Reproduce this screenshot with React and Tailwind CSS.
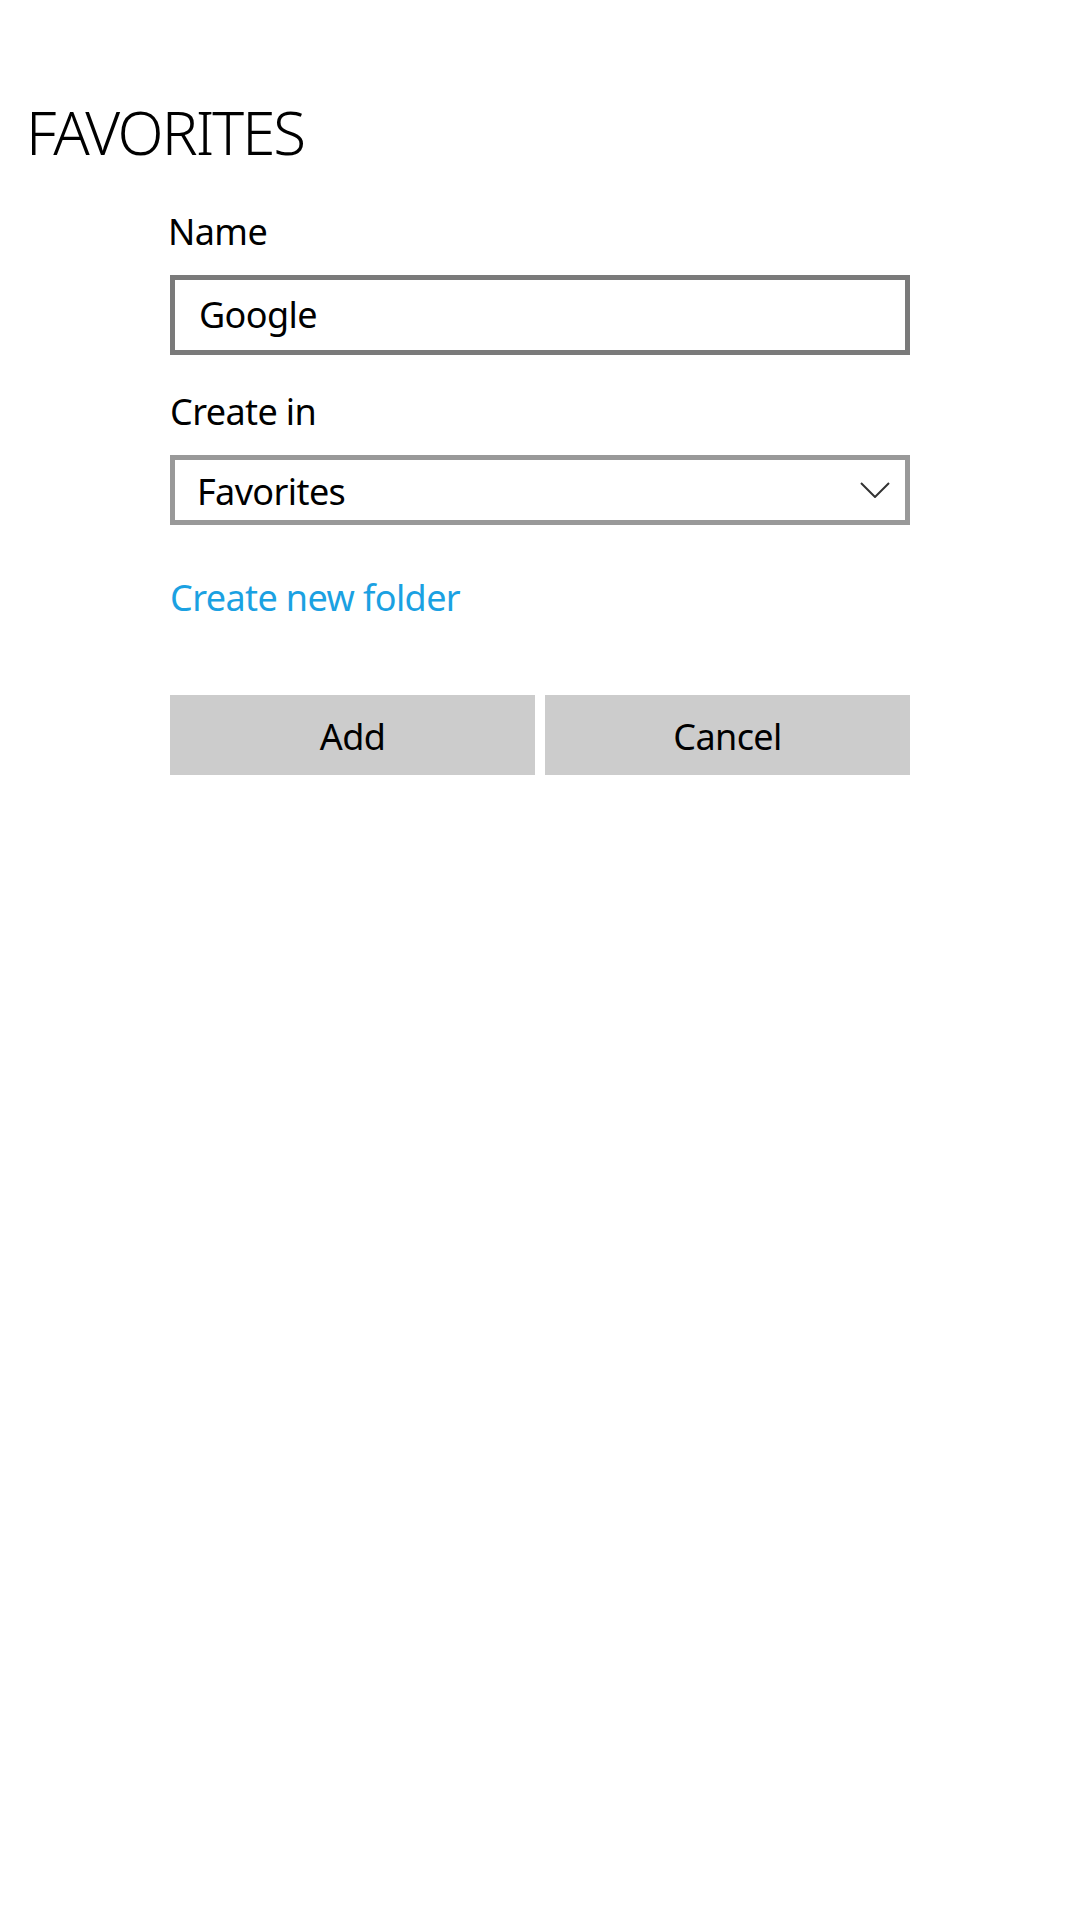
import React from "react";

export default function App() {
  const font = { fontFamily: '"Noto Sans", "Open Sans", sans-serif' };
  return (
    <div className="w-[1080px] h-[1920px] bg-white text-black tracking-[-0.6px]" style={font}>
      <div className="pt-[92px] pl-[26px]">
        <h1 className="text-[60px] leading-[80px] font-light tracking-[-2px]">FAVORITES</h1>
      </div>
      <div className="ml-[170px] w-[740px] flex flex-col">
        <div className="mt-[36px] text-[36px] leading-[48px] -ml-[2px]">Name</div>
        <div className="mt-[19px] h-[80px] border-[5px] border-[#7a7a7a] flex items-center pl-[24px]">
          <span className="text-[36px] leading-[48px]">Google</span>
        </div>
        <div className="mt-[33px] text-[36px] leading-[48px]">Create in</div>
        <div className="mt-[19px] h-[70px] border-[5px] border-[#999999] flex items-center justify-between pl-[22px] pr-[15px]">
          <span className="text-[36px] leading-[48px] pt-[4px]">Favorites</span>
          <svg width="30" height="16" viewBox="0 0 30 16" fill="none">
            <path d="M1 1 L15 15 L29 1" stroke="#333333" strokeWidth="2" />
          </svg>
        </div>
        <div className="mt-[49px] text-[36px] leading-[48px] text-[#1ba1e2]">Create new folder</div>
        <div className="mt-[73px] flex gap-[10px]">
          <button className="flex-1 h-[80px] bg-[#cccccc] text-[36px] leading-[48px] flex items-center justify-center pt-[4px]">Add</button>
          <button className="flex-1 h-[80px] bg-[#cccccc] text-[36px] leading-[48px] flex items-center justify-center pt-[4px]">Cancel</button>
        </div>
      </div>
    </div>
  );
}
